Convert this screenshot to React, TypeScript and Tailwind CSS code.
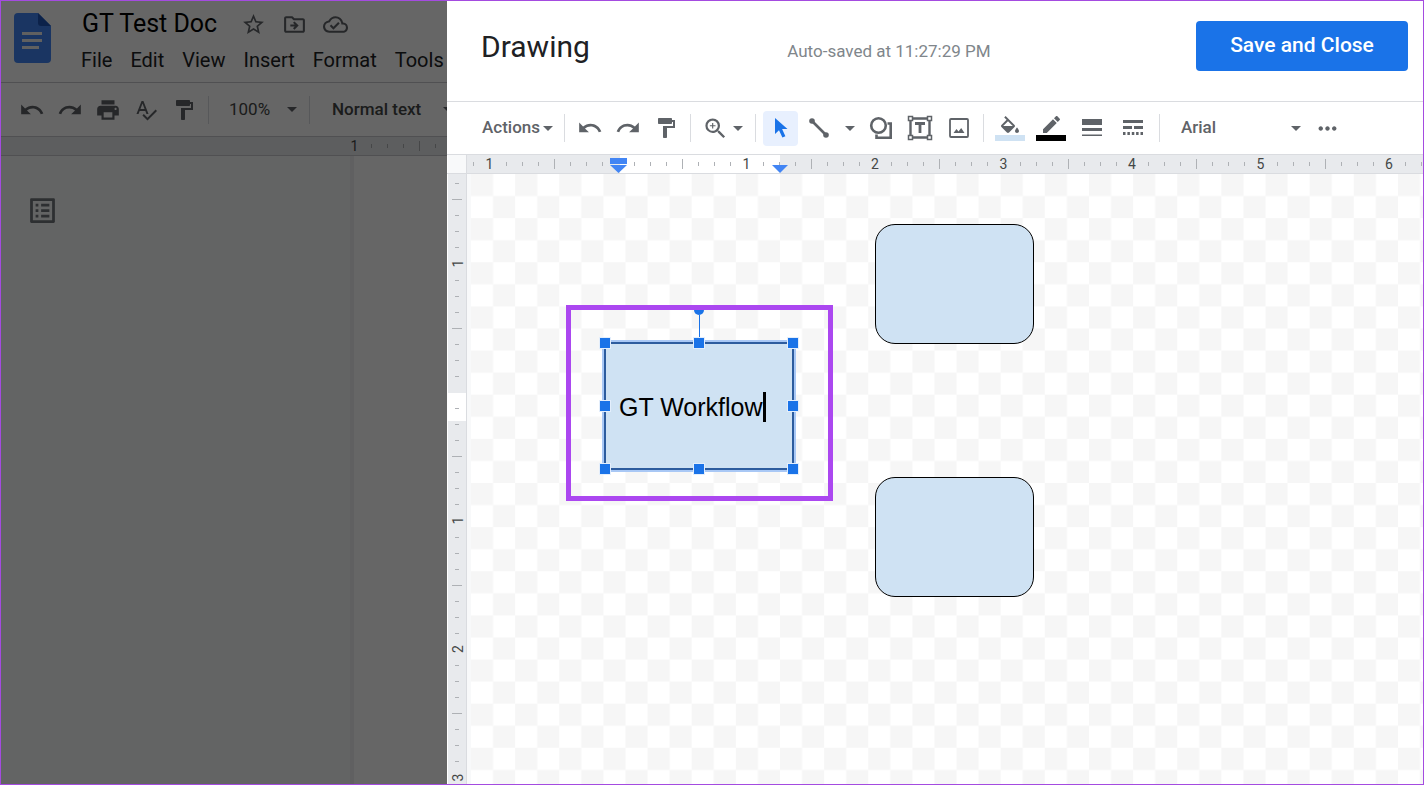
import type { ReactNode } from "react";
import {
  MdFormatPaint,
  MdListAlt,
  MdMoreHoriz,
  MdOutlineCloudDone,
  MdOutlineDriveFileMove,
  MdPrint,
  MdRedo,
  MdSpellcheck,
  MdStarBorder,
  MdUndo,
  MdZoomIn,
} from "react-icons/md";

const MENUS = ["File", "Edit", "View", "Insert", "Format", "Tools"];

// One ruler inch in pixels, split into eighths.
const INCH = 128.5;
const EIGHTH = INCH / 8;

// Transparency grid: a tile is two cells wide and two cells high.
const CELL = 22.07;

function Caret() {
  return (
    <svg width="10" height="5" viewBox="0 0 10 5" className="pointer-events-none shrink-0 fill-[#5f6368]">
      <path d="M0 0h10L5 5z" />
    </svg>
  );
}

function Divider() {
  return <div className="mx-[7px] h-7 w-px shrink-0 bg-[#dadce0]" />;
}

interface ToolProps {
  label: string;
  active?: boolean;
  wide?: boolean;
  children: ReactNode;
}

function Tool({ label, active, wide, children }: ToolProps) {
  return (
    <button
      aria-label={label}
      title={label}
      className={`flex h-[35px] shrink-0 items-center justify-center rounded-sm ${wide ? "w-[38px]" : "w-[35px]"} ${
        active ? "bg-[#e8f0fe] text-[#1a73e8]" : "text-[#5f6368] hover:bg-gray-100"
      }`}
    >
      {children}
    </button>
  );
}

function DocsLogo() {
  return (
    <svg width="37" height="50" viewBox="0 0 37 50" className="shrink-0">
      <path d="M4 0h20l13 13v33a4 4 0 0 1-4 4H4a4 4 0 0 1-4-4V4a4 4 0 0 1 4-4z" fill="#4285f4" />
      <path d="M24 0l13 13H27a3 3 0 0 1-3-3z" fill="#1f56b8" />
      <path d="M8 19h20v3H8zM8 26h20v3H8zM8 33h17v3H8z" fill="#f1f1f1" />
    </svg>
  );
}

function SelectIcon() {
  return (
    <svg width="24" height="24" viewBox="0 0 24 24" fill="currentColor">
      <path d="M6 2v16l4-3.8 3.4 7.4 3-1.4-3.3-7.2h5.4z" />
    </svg>
  );
}

function LineIcon() {
  return (
    <svg width="24" height="24" viewBox="0 0 24 24" fill="currentColor">
      <path d="M5 5l14 14" stroke="currentColor" strokeWidth="2.6" />
      <circle cx="5" cy="5" r="2.8" />
      <circle cx="19" cy="19" r="2.8" />
    </svg>
  );
}

function ShapeIcon() {
  return (
    <svg width="24" height="24" viewBox="0 0 24 24" fill="none" stroke="currentColor" strokeWidth="2.6">
      <circle cx="9.5" cy="9.5" r="7.3" />
      <path d="M18.5 7.5h3.2v14.3H7.5v-3.3" />
    </svg>
  );
}

function TextBoxIcon() {
  return (
    <svg width="26" height="26" viewBox="0 0 26 26" fill="none" stroke="currentColor">
      <path d="M3.5 3.5h19v19h-19z" strokeWidth="2.4" />
      <path d="M8 8.5h10M13 8.5V18" strokeWidth="2.8" />
      <path
        d="M1.5 1.5h4v4h-4zM20.5 1.5h4v4h-4zM1.5 20.5h4v4h-4zM20.5 20.5h4v4h-4z"
        fill="#fff"
        strokeWidth="1.5"
      />
    </svg>
  );
}

function ImageIcon() {
  return (
    <svg width="20" height="20" viewBox="0 0 20 20">
      <rect x="1" y="1" width="18" height="18" rx="1" fill="none" stroke="currentColor" strokeWidth="1.8" />
      <path d="M4.5 15l3-4 2 2.5 2.7-3.5 3.3 5z" fill="currentColor" />
    </svg>
  );
}

function FillIcon() {
  return (
    <svg width="24" height="19" viewBox="0 0 24 19" fill="currentColor">
      <path d="M16.56 8.94L7.62 0 6.21 1.41l2.38 2.38-5.15 5.15c-.59.59-.59 1.54 0 2.12l5.5 5.5c.29.29.68.44 1.06.44s.77-.15 1.06-.44l5.5-5.5c.59-.58.59-1.53 0-2.12zM5.21 10L10 5.21 14.79 10H5.21zM19 11.5s-2 2.17-2 3.5c0 1.1.9 2 2 2s2-.9 2-2c0-1.33-2-3.5-2-3.5z" />
    </svg>
  );
}

function PencilIcon() {
  return (
    <svg width="24" height="19" viewBox="0 0 24 19" fill="currentColor">
      <path d="M17.75 7L14 3.25l-10 10V17h3.75l10-10zm2.96-2.96c.39-.39.39-1.02 0-1.41L18.37.29c-.39-.39-1.02-.39-1.41 0L15 2.25 18.75 6l1.96-1.96z" />
    </svg>
  );
}

function LineWeightIcon() {
  return (
    <svg width="20" height="18" viewBox="0 0 20 18" fill="currentColor">
      <path d="M0 0h20v6H0zM0 9h20v3H0zM0 15.5h20V17H0z" />
    </svg>
  );
}

function LineDashIcon() {
  return (
    <svg width="20" height="16" viewBox="0 0 20 16" fill="currentColor">
      <path d="M0 0h20v3H0zM0 6h9v3H0zM11 6h9v3h-9zM0 12h2.5v3H0zM4.4 12h2.5v3H4.4zM8.8 12h2.5v3H8.8zM13.1 12h2.5v3h-2.5zM17.5 12H20v3h-2.5z" />
    </svg>
  );
}

interface RulerProps {
  // Distance from the ruler's start to the zero mark.
  zero: number;
  from: number;
  to: number;
  vertical?: boolean;
}

function Ruler({ zero, from, to, vertical }: RulerProps) {
  const marks: ReactNode[] = [];
  for (let i = from; i <= to; i++) {
    const at = zero + i * EIGHTH;
    if (i % 8 === 0) {
      if (i === 0) continue;
      marks.push(
        <text
          key={i}
          x={vertical ? 0 : at}
          y={vertical ? 0 : 14}
          transform={vertical ? `translate(15 ${at}) rotate(-90)` : undefined}
          textAnchor="middle"
          className="fill-[#444746] text-[14px]"
        >
          {Math.abs(i / 8)}
        </text>
      );
      continue;
    }
    const half = i % 4 === 0 ? 5 : 2;
    const p = Math.round(at);
    marks.push(
      vertical ? (
        <rect key={i} x={9 - half} y={p} width={half * 2} height="1" className="fill-[#aeb1b5]" />
      ) : (
        <rect key={i} x={p} y={9 - half} width="1" height={half * 2} className="fill-[#aeb1b5]" />
      )
    );
  }
  return (
    <svg width="100%" height="100%" className="block">
      {marks}
    </svg>
  );
}

function DocsPage() {
  return (
    <section aria-label="Document" className="relative flex w-[446px] shrink-0 flex-col overflow-hidden bg-white">
      <header className="flex h-[82px] shrink-0 gap-[30px] border-b border-[#c7c9cc] pt-3 pl-[13px]">
        <DocsLogo />
        <div className="-mt-[3px] flex flex-col">
          <div className="flex h-7 items-center gap-4 pl-px text-[#5f6368]">
            <h1 className="mr-2 text-[25px] leading-7 text-black">GT Test Doc</h1>
            <button aria-label="Star">
              <MdStarBorder size={25} />
            </button>
            <button aria-label="Move">
              <MdOutlineDriveFileMove size={25} />
            </button>
            <button aria-label="See document status">
              <MdOutlineCloudDone size={25} />
            </button>
          </div>
          <nav className="mt-[10px] flex gap-[18px] text-[20px] leading-6 text-[#202124]">
            {MENUS.map((m) => (
              <button key={m}>{m}</button>
            ))}
          </nav>
        </div>
      </header>

      <div className="flex h-[53px] shrink-0 items-center pl-[13px] text-[#444746]">
        <div className="flex shrink-0 gap-[3px]">
          <Tool label="Undo">
            <MdUndo size={26} />
          </Tool>
          <Tool label="Redo">
            <MdRedo size={26} />
          </Tool>
          <Tool label="Print">
            <MdPrint size={26} />
          </Tool>
          <Tool label="Spelling and grammar check">
            <MdSpellcheck size={24} />
          </Tool>
          <Tool label="Paint format">
            <MdFormatPaint size={24} />
          </Tool>
        </div>
        <Divider />
        <label className="flex w-[86px] shrink-0 items-center pl-[13px]">
          <select aria-label="Zoom" className="w-[58px] shrink-0 appearance-none text-[17px]">
            <option>100%</option>
          </select>
          <Caret />
        </label>
        <Divider />
        <label className="flex shrink-0 items-center pl-[15px]">
          <select aria-label="Styles" className="w-[111px] appearance-none text-[17px] font-medium">
            <option>Normal text</option>
          </select>
          <Caret />
        </label>
      </div>

      <div className="flex h-5 shrink-0 border-y border-[#c7c9cc] bg-[#e8eaed] pl-[333px]">
        <Ruler zero={149} from={-8} to={0} />
      </div>

      <div className="flex min-h-0 flex-1 bg-[#f8f9fa]">
        <div className="w-[353px] shrink-0 border-r-4 border-[#f0f1f2] pt-[38px] pl-[25px] text-[#70757a]">
          <button aria-label="Show document outline">
            <MdListAlt size={33} />
          </button>
        </div>
        <div className="flex-1 bg-white" />
      </div>

      {/* Scrim behind the open dialog */}
      <div className="absolute inset-0 bg-black/60" />
    </section>
  );
}

function DrawingToolbar() {
  return (
    <div className="flex h-[52px] shrink-0 items-center overflow-hidden pl-[35px] text-[17px] text-[#5f6368]">
      <button className="flex shrink-0 items-center gap-[3px] pr-1 font-medium">
        Actions
        <Caret />
      </button>
      <Divider />
      <div className="flex shrink-0 gap-[3px]">
        <Tool label="Undo">
          <MdUndo size={26} />
        </Tool>
        <Tool label="Redo">
          <MdRedo size={26} />
        </Tool>
        <Tool label="Paint format">
          <MdFormatPaint size={24} />
        </Tool>
      </div>
      <Divider />
      <button aria-label="Zoom" className="flex w-[50px] shrink-0 items-center gap-1 pl-1">
        <MdZoomIn size={27} />
        <Caret />
      </button>
      <Divider />
      <Tool label="Select" active>
        <SelectIcon />
      </Tool>
      <div className="ml-[3px] flex shrink-0">
        <Tool label="Line">
          <LineIcon />
        </Tool>
        <button aria-label="Line types" className="flex w-[27px] items-center justify-center">
          <Caret />
        </button>
      </div>
      <div className="flex shrink-0 gap-1">
        <Tool label="Shape">
          <ShapeIcon />
        </Tool>
        <Tool label="Text box">
          <TextBoxIcon />
        </Tool>
        <Tool label="Image">
          <ImageIcon />
        </Tool>
      </div>
      <Divider />
      <div className="flex shrink-0 gap-[3px]">
        <Tool label="Fill color" wide>
          <span className="flex flex-col items-center">
            <FillIcon />
            <span className="h-[6px] w-[30px] bg-[#cfe2f3]" />
          </span>
        </Tool>
        <Tool label="Border color" wide>
          <span className="flex flex-col items-center">
            <PencilIcon />
            <span className="h-[6px] w-[30px] bg-black" />
          </span>
        </Tool>
        <Tool label="Border weight" wide>
          <LineWeightIcon />
        </Tool>
        <Tool label="Border dash" wide>
          <LineDashIcon />
        </Tool>
      </div>
      <Divider />
      <label className="flex w-[143px] shrink-0 items-center pl-[14px]">
        <select aria-label="Font" className="w-[110px] appearance-none font-medium">
          <option>Arial</option>
        </select>
        <Caret />
      </label>
      <Tool label="More">
        <MdMoreHoriz size={27} />
      </Tool>
    </div>
  );
}

const HANDLES = [
  "top-0 left-0",
  "top-0 left-1/2",
  "top-0 left-full",
  "top-1/2 left-0",
  "top-1/2 left-full",
  "top-full left-0",
  "top-full left-1/2",
  "top-full left-full",
];

function SelectedShape() {
  return (
    <div className="absolute top-[169px] left-[138px] h-[126px] w-[188px] bg-[#cfe2f3] outline-3 outline-[#a9c8f5]">
      <div className="absolute -inset-px border-2 border-[#2d5c9e]" />
      <div className="absolute bottom-full left-1/2 h-[28px] w-px bg-[#1a73e8]" />
      <div className="flex h-full items-center pt-px pl-[14px]">
        <input
          aria-label="Shape text"
          defaultValue="GT Workflow"
          className="w-[144px] font-['Liberation_Sans',Arial,sans-serif] text-[25px] leading-[30px] text-black outline-none"
        />
        <span className="h-[30px] w-[3px] bg-black" />
      </div>
      {HANDLES.map((h) => (
        <span
          key={h}
          className={`absolute ${h} size-[12px] -translate-x-1/2 -translate-y-1/2 border border-[#e3eefc] bg-[#1a73e8]`}
        />
      ))}
    </div>
  );
}

function Canvas() {
  return (
    <div className="relative min-w-0 flex-1 overflow-hidden bg-[#f8f9fa] pl-1">
      <svg width="100%" height="100%" className="block bg-white">
        <defs>
          <pattern id="grid" width={CELL * 2} height={CELL * 2} patternUnits="userSpaceOnUse">
            <path d={`M0 0h${CELL}v${CELL}H0zM${CELL} ${CELL}h${CELL}v${CELL}h-${CELL}z`} fill="#f6f6f6" />
          </pattern>
        </defs>
        <rect width="100%" height="100%" fill="url(#grid)" />
      </svg>
      <div className="absolute top-[50px] left-[408px] h-[120px] w-[159px] rounded-[20px] border border-black bg-[#cfe2f3]" />
      <div className="absolute top-[303px] left-[408px] h-[120px] w-[159px] rounded-[20px] border border-black bg-[#cfe2f3]" />
      <SelectedShape />
      <span className="absolute top-[131px] left-[227px] size-[10px] rounded-full bg-[#1a73e8]" />
      <div className="absolute top-[131px] left-[99px] h-[196px] w-[267px] border-[5px] border-[#ab47f0]" />
    </div>
  );
}

function DrawingDialog() {
  return (
    <section role="dialog" aria-label="Drawing" className="flex min-w-0 flex-1 flex-col bg-white">
      <header className="flex h-[101px] shrink-0 items-start border-b border-[#dadce0] pt-5 pr-[15px] pl-[34px]">
        <div className="flex h-[50px] w-full items-baseline justify-between">
          <h2 className="text-[30px] leading-[52px] text-[#202124]">Drawing</h2>
          <p className="mr-2 text-[17px] text-[#80868b]">Auto-saved at 11:27:29 PM</p>
          <button className="h-[50px] w-[212px] self-start rounded bg-[#1a73e8] text-[21px] font-medium text-white">
            Save and Close
          </button>
        </div>
      </header>

      <DrawingToolbar />

      <div className="flex h-5 shrink-0 border-y border-[#dadce0] pl-px">
        <div className="w-[18px] shrink-0 bg-[#f8f9fa]" />
        <div className="relative flex-1 overflow-hidden border-l border-[#dadce0] bg-[linear-gradient(to_right,#e8eaed_153px,#fff_153px,#fff_313px,#e8eaed_313px)]">
          <Ruler zero={151} from={-9} to={54} />
          <svg width="18" height="16" viewBox="0 0 18 16" className="absolute top-[3px] left-[143px] fill-[#4285f4]">
            <path d="M0 0h17v6H0zM0 7h17l-8.5 8z" />
          </svg>
          <svg width="16" height="8" viewBox="0 0 16 8" className="absolute top-[10px] left-[305px] fill-[#4285f4]">
            <path d="M0 0h16L8 8z" />
          </svg>
        </div>
      </div>

      <div className="flex min-h-0 flex-1 pl-px">
        <div className="w-[19px] shrink-0 border-r border-[#dadce0] bg-[linear-gradient(to_bottom,#e8eaed_219px,#fff_219px,#fff_247px,#e8eaed_247px)]">
          <Ruler zero={218} from={-13} to={24} vertical />
        </div>
        <Canvas />
      </div>
    </section>
  );
}

export default function App() {
  return (
    <main className="flex h-screen overflow-hidden border border-[#a44be0] font-[Roboto,sans-serif]">
      <DocsPage />
      <DrawingDialog />
    </main>
  );
}
